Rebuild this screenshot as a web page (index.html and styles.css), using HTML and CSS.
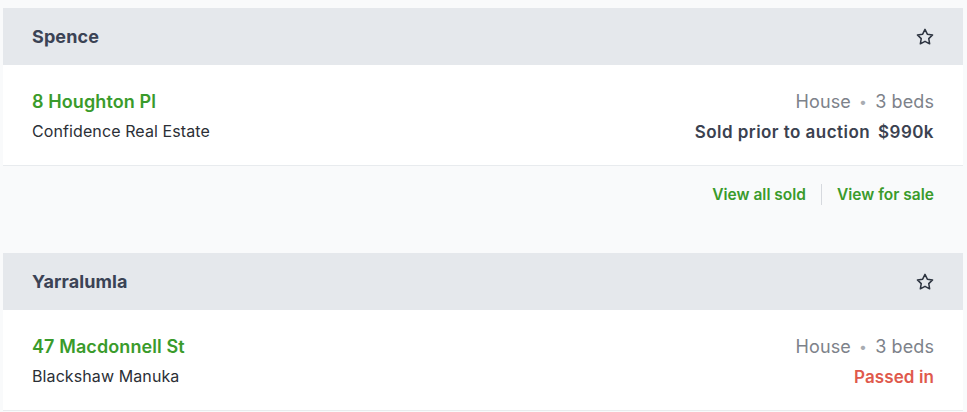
FILE: index.html
```html
<!DOCTYPE html>
<html>
<head>
<meta charset="utf-8">
<link rel="stylesheet" href="styles.css">
</head>
<body>
<div class="list">
  <section class="card">
    <header class="card-head">
      <h2 class="suburb">Spence</h2>
      <svg class="star" viewBox="0 0 24 24" width="20" height="20"><path d="M12 2.8l2.8 5.8 6.3.9-4.6 4.4 1.1 6.3L12 17.2l-5.6 3 1.1-6.3-4.6-4.4 6.3-.9z" fill="none" stroke="#2d3440" stroke-width="1.8" stroke-linejoin="round"/></svg>
    </header>
    <div class="listing">
      <div class="left">
        <a class="address">8 Houghton Pl</a>
        <div class="agency">Confidence Real Estate</div>
      </div>
      <div class="right">
        <div class="meta">House <span class="dot">•</span> 3 beds</div>
        <div class="result">Sold prior to auction<span class="price">$990k</span></div>
      </div>
    </div>
    <div class="card-foot">
      <a class="link">View all sold</a>
      <span class="sep"></span>
      <a class="link">View for sale</a>
    </div>
  </section>
  <section class="card">
    <header class="card-head">
      <h2 class="suburb">Yarralumla</h2>
      <svg class="star" viewBox="0 0 24 24" width="20" height="20"><path d="M12 2.8l2.8 5.8 6.3.9-4.6 4.4 1.1 6.3L12 17.2l-5.6 3 1.1-6.3-4.6-4.4 6.3-.9z" fill="none" stroke="#2d3440" stroke-width="1.8" stroke-linejoin="round"/></svg>
    </header>
    <div class="listing">
      <div class="left">
        <a class="address">47 Macdonnell St</a>
        <div class="agency">Blackshaw Manuka</div>
      </div>
      <div class="right">
        <div class="meta">House <span class="dot">•</span> 3 beds</div>
        <div class="result passed">Passed in</div>
      </div>
    </div>
  </section>
</div>
</body>
</html>
```
FILE: styles.css
```css
* { box-sizing: border-box; }
html, body { margin: 0; padding: 0; }
body {
  background: #f9fafb;
  font-family: Inter, "Noto Sans", "Liberation Sans", sans-serif;
  color: #2b2f36;
}
.list {
  padding: 8px 4px 0 3px;
  display: flex;
  flex-direction: column;
}
.card-head {
  height: 57px;
  background: #e5e8ec;
  display: flex;
  align-items: center;
  justify-content: space-between;
  padding: 0 29px;
}
.suburb {
  margin: 0;
  font-size: 18px;
  font-weight: 700;
  color: #3b4355;
  letter-spacing: 0.1px;
}
.star { display: block; margin-right: -1px; }
.listing {
  background: #fff;
  border-bottom: 1px solid #e8ebee;
  padding: 25px 29px 21px 29px;
  display: flex;
  justify-content: space-between;
}
.left, .right { display: flex; flex-direction: column; gap: 6px; }
.right { align-items: flex-end; }
.address {
  font-size: 18px;
  line-height: 24px;
  font-weight: 600;
  color: #3a9b2b;
  letter-spacing: 0.1px;
}
.agency {
  font-size: 16px;
  line-height: 23px;
  color: #2b2f36;
  letter-spacing: 0.1px;
}
.meta {
  font-size: 18px;
  line-height: 24px;
  color: #7d828a;
  letter-spacing: 0.1px;
}
.dot { color: #a8acb2; font-size: 14px; margin: 0 3px; position: relative; top: -1px; }
.result {
  font-size: 17px;
  line-height: 23px;
  font-weight: 600;
  color: #3b4250;
  letter-spacing: 0.45px;
}
.price { margin-left: 8px; }
.passed { color: #e0594c; letter-spacing: 0.1px; }
.card-foot {
  padding: 18px 29px 48px;
  display: flex;
  justify-content: flex-end;
  align-items: center;
  gap: 15px;
}
.link {
  font-size: 15.5px;
  line-height: 20px;
  font-weight: 600;
  color: #3a9b2b;
}
.sep {
  width: 1px;
  height: 21px;
  background: #d6d9de;
}
```
